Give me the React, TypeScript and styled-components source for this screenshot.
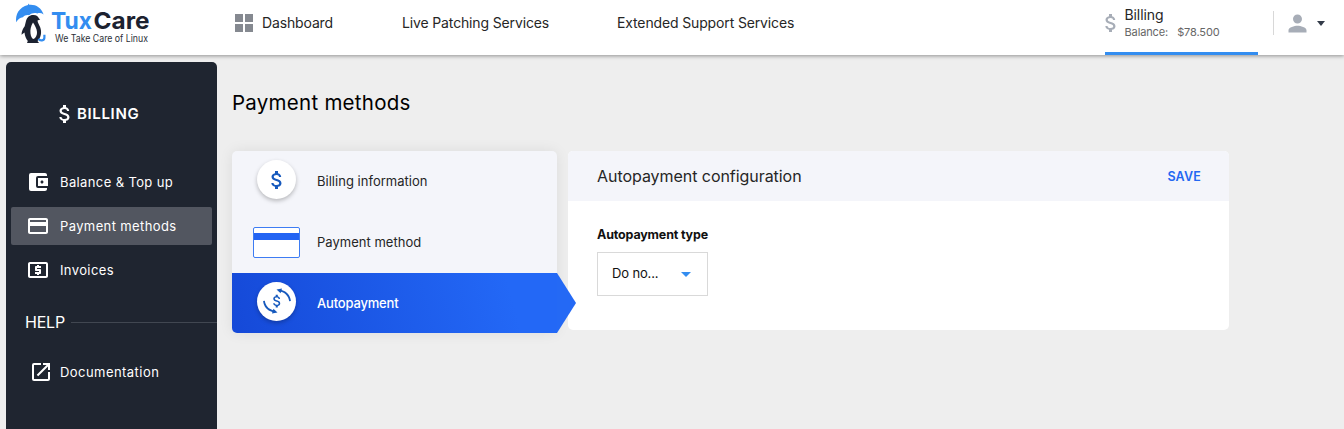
import React from "react";
import styled, { createGlobalStyle, css } from "styled-components";
import {
  MdAttachMoney,
  MdAccountBalanceWallet,
  MdCreditCard,
  MdLocalAtm,
  MdOpenInNew,
  MdPerson,
} from "react-icons/md";

const GlobalStyle = createGlobalStyle`
  * { box-sizing: border-box; }
  body {
    margin: 0;
    background: #eeeeee;
    color: #262626;
    font-family: Inter, "Liberation Sans", sans-serif;
    font-size: 14px;
    overflow: hidden;
  }
  svg { display: block; flex: none; }
`;

const Page = styled.div`
  height: 429px;
  display: flex;
  flex-direction: column;
  overflow: hidden;
`;

const Header = styled.header`
  height: 55px;
  flex: none;
  display: flex;
  align-items: flex-start;
  background: #fff;
  box-shadow: 0 1px 4px rgba(0, 0, 0, 0.4);
  z-index: 1;
`;

const LogoLink = styled.a`
  width: 235px;
  height: 55px;
`;

const NavItem = styled.a<{ $width: number }>`
  display: flex;
  align-items: center;
  gap: 9px;
  width: ${(p) => p.$width}px;
  height: 46px;
  white-space: nowrap;
  font-size: 14px;
  letter-spacing: -0.14px;
  > span {
    margin-bottom: 2px;
  }
`;

const BillingTab = styled.a`
  display: flex;
  width: 153px;
  height: 55px;
  padding-top: 6px;
  border-bottom: 3px solid #338df0;
  > svg {
    margin: 5px 2px 0 -6px;
    color: #a7adb7;
  }
`;

const BillingTexts = styled.div`
  display: flex;
  flex-direction: column;
  margin-left: -0.5px;
`;

const BillingTitle = styled.span`
  font-size: 14px;
  line-height: 18px;
  letter-spacing: -0.1px;
`;

const BillingBalance = styled.span`
  display: flex;
  gap: 9px;
  font-size: 11px;
  line-height: 16px;
  letter-spacing: -0.12px;
  color: #666;
`;

const UserMenu = styled.div`
  display: flex;
  align-items: center;
  height: 24px;
  margin: 11px 0 0 15px;
  padding-left: 10px;
  border-left: 1px solid #d8d8d8;
  color: #a7adb7;
`;

const Caret = styled.span<{ $color: string; $size: number }>`
  border: ${(p) => p.$size}px solid transparent;
  border-top: 5px solid ${(p) => p.$color};
  border-bottom: 0;
`;

const Body = styled.div`
  flex: 1;
  display: flex;
  align-items: flex-start;
  padding: 7px 0 0 6px;
`;

const Sidebar = styled.aside`
  width: 211px;
  height: 380px;
  flex: none;
  padding-top: 39px;
  background: #1f2530;
  border-radius: 5px;
  color: #fff;
`;

const SidebarTitle = styled.h2`
  display: flex;
  align-items: center;
  height: 26px;
  margin: 0 0 36px;
  padding-left: 47px;
  font-size: 15px;
  font-weight: 600;
  letter-spacing: 0.65px;
  > span {
    margin-bottom: 2px;
  }
`;

const SideItem = styled.a<{ $active?: boolean; $indent?: number }>`
  display: flex;
  align-items: center;
  height: 38px;
  margin: 0 5px 6px;
  padding-left: ${(p) => p.$indent ?? 15}px;
  border-radius: 2px;
  font-size: 13px;
  letter-spacing: ${(p) => (p.$indent ? 0.45 : 0.38)}px;
  ${(p) => p.$active && css`background: #525660;`}
  > span {
    margin-left: ${(p) => 25 - (p.$indent ?? 15)}px;
  }
`;

const SideSection = styled.div`
  display: flex;
  align-items: center;
  gap: 6px;
  height: 30px;
  margin: 18px 0 16px;
  padding-left: 19px;
  font-size: 16px;
  letter-spacing: -0.2px;
  &::after {
    content: "";
    flex: 1;
    height: 1px;
    background: #414751;
  }
`;

const Main = styled.main`
  padding: 26px 0 0 15px;
`;

const PageTitle = styled.h1`
  height: 30px;
  margin: 0 0 33px;
  line-height: 30px;
  font-size: 20.5px;
  font-weight: 400;
  letter-spacing: 0.26px;
  color: #000;
`;

const Panels = styled.div`
  display: flex;
  align-items: flex-start;
  gap: 11px;
`;

const Steps = styled.nav`
  position: relative;
  z-index: 1;
  width: 325px;
  height: 182px;
  border-radius: 5px;
  background: #f4f5fa;
  box-shadow: 0 0 14px rgba(0, 0, 0, 0.08);
`;

const Step = styled.a<{ $active?: boolean }>`
  position: relative;
  display: flex;
  align-items: center;
  height: ${(p) => (p.$active ? 60 : 61)}px;
  font-size: 13px;
  letter-spacing: 0.02px;
  > span {
    margin-bottom: ${(p) => (p.$active ? 0 : 2)}px;
  }
  ${(p) =>
    p.$active &&
    css`
      color: #fff;
      font-weight: 500;
      letter-spacing: -0.18px;
      border-radius: 0 0 0 5px;
      background: linear-gradient(75deg, #1549d8, #2368f6 85%);
      &::after {
        content: "";
        position: absolute;
        left: 100%;
        top: 0;
        border: solid transparent;
        border-width: 30px 0 30px 19px;
        border-left-color: #2469f5;
      }
    `}
`;

const StepIcon = styled.div`
  display: flex;
  justify-content: center;
  width: 85px;
  padding-left: 4px;
`;

const Disc = styled.div`
  display: flex;
  align-items: center;
  justify-content: center;
  width: 39px;
  height: 39px;
  margin-top: -4px;
  border-radius: 50%;
  background: #fff;
  color: #1659bd;
  box-shadow: 0 2px 4px rgba(0, 0, 0, 0.25);
`;

const BankCard = styled.div`
  width: 47px;
  height: 31px;
  padding-top: 5px;
  border: 1px solid #3d7cf3;
  border-radius: 2px;
  background: #fff;
  &::before {
    content: "";
    display: block;
    height: 7px;
    background: #2364f3;
  }
`;

const ConfigCard = styled.section`
  width: 661px;
  height: 179px;
  border-radius: 5px;
  background: #fff;
  overflow: hidden;
`;

const ConfigHeader = styled.div`
  display: flex;
  align-items: center;
  justify-content: space-between;
  height: 50px;
  padding: 0 28px 0 29px;
  background: #f4f5fa;
  font-size: 16px;
  letter-spacing: -0.05px;
`;

const SaveButton = styled.button`
  padding: 0;
  border: 0;
  background: none;
  color: #2368f2;
  font: 600 12.5px Inter, sans-serif;
  letter-spacing: 0.2px;
`;

const Field = styled.div`
  display: flex;
  flex-direction: column;
  padding: 24px 29px;
`;

const FieldLabel = styled.label`
  height: 27px;
  line-height: 20px;
  font-size: 12.5px;
  font-weight: 700;
  letter-spacing: -0.17px;
  color: #111;
`;

const Select = styled.div`
  display: flex;
  align-items: center;
  justify-content: space-between;
  width: 111px;
  height: 44px;
  padding: 0 16px 0 14px;
  border: 1px solid #d9d9d9;
  font-size: 13px;
  letter-spacing: -0.15px;
  color: #111;
  > span:first-child {
    margin-bottom: 2px;
  }
`;

const Logo = () => (
  <svg width="160" height="55" viewBox="0 0 160 55">
    <path d="M26 21c1-4 4-6.300 7.500-6 3 .2 4.800 1.600 5.500 3.500l1.200 1-2.700.9c.2 2.500 1.700 4.200 2.600 6.600 2 5.500.8 10.800-2.600 14l1.500 2H27l.8-2c-1.700-2-3-5-3.300-8.500l-3 2.200c.1-3.500 1.500-6 3.200-8.400z" fill="#1c2230" />
    <path d="M33 22.500c-2 3-3 7-2.500 11 .4 3.300 1.500 5.200 3 5.500 2.300-1 3.700-3.700 3.500-7-.2-3.500-2-6.300-4-9.500z" fill="#fff" />
    <path d="M16.300 22.300c-1.400-7.300 2.800-15.200 11.700-17.200l.4-1.500.9 1.200c5.900-.6 12 2.400 14.300 9.700-2-1.500-4.200-1.900-6.300-1-3-.9-5.800-.3-8.200 1.700-2.100-.7-4.600 0-6.200 2.100-2.800.3-5.100 2-6.600 5z" fill="#338df0" />
    <path d="M38.500 38.700c1.500 2.800 6 2 5.900-1.200v-2.700" stroke="#338df0" strokeWidth="2.200" fill="none" />
    <g fontFamily="Inter, sans-serif">
      <text x="51" y="29" fontSize="23.500" fontWeight="700" fill="#338df0" textLength="41" lengthAdjust="spacingAndGlyphs">Tux</text>
      <text x="93.500" y="29" fontSize="23.500" fontWeight="700" fill="#1c2230" textLength="56" lengthAdjust="spacingAndGlyphs">Care</text>
      <text x="55" y="41.500" fontSize="9.800" fill="#2b2f38" textLength="93" lengthAdjust="spacingAndGlyphs">We Take Care of Linux</text>
    </g>
  </svg>
);

const DashboardIcon = () => (
  <svg width="18" height="18" viewBox="0 0 18 18" fill="#858990">
    <path d="M0 0h8v8H0zM10 0h8v8h-8zM0 10h8v8H0zM10 10h8v8h-8z" />
  </svg>
);

const AUTOPAY_ARROW =
  "M14.500 3.600L20 2.400l-.4 1.600C25 5.500 28.400 9.500 28.900 15l-1.700.2C26.500 10.500 23.500 7 19 5.800l-.4 1.400z";

const AutopayIcon = () => (
  <svg width="30" height="30" viewBox="0 0 30 30" fill="#1659bd">
    <path d={AUTOPAY_ARROW} />
    <path d={AUTOPAY_ARROW} transform="rotate(180 15 15)" />
    <g transform="translate(6.700 6.700) scale(.7)">
      <MdAttachMoney size={24} />
    </g>
  </svg>
);

export default function App() {
  return (
    <Page>
      <GlobalStyle />
      <Header>
        <LogoLink><Logo /></LogoLink>
        <NavItem $width={167}><DashboardIcon /><span>Dashboard</span></NavItem>
        <NavItem $width={215}><span>Live Patching Services</span></NavItem>
        <NavItem $width={488}><span>Extended Support Services</span></NavItem>
        <BillingTab>
          <MdAttachMoney size={24} />
          <BillingTexts>
            <BillingTitle>Billing</BillingTitle>
            <BillingBalance><span>Balance:</span><span>$78.500</span></BillingBalance>
          </BillingTexts>
        </BillingTab>
        <UserMenu>
          <MdPerson size={27} />
          <Caret $color="#333b49" $size={4} style={{ marginLeft: 6 }} />
        </UserMenu>
      </Header>
      <Body>
        <Sidebar>
          <SidebarTitle><MdAttachMoney size={24} /><span>BILLING</span></SidebarTitle>
          <SideItem><MdAccountBalanceWallet size={24} /><span>Balance &amp; Top up</span></SideItem>
          <SideItem $active><MdCreditCard size={24} /><span>Payment methods</span></SideItem>
          <SideItem><MdLocalAtm size={24} /><span>Invoices</span></SideItem>
          <SideSection>HELP</SideSection>
          <SideItem $indent={18}><MdOpenInNew size={24} /><span>Documentation</span></SideItem>
        </Sidebar>
        <Main>
          <PageTitle>Payment methods</PageTitle>
          <Panels>
            <Steps>
              <Step><StepIcon><Disc><MdAttachMoney size={24} /></Disc></StepIcon><span>Billing information</span></Step>
              <Step><StepIcon><BankCard /></StepIcon><span>Payment method</span></Step>
              <Step $active><StepIcon><Disc><AutopayIcon /></Disc></StepIcon><span>Autopayment</span></Step>
            </Steps>
            <ConfigCard>
              <ConfigHeader>Autopayment configuration<SaveButton>SAVE</SaveButton></ConfigHeader>
              <Field>
                <FieldLabel>Autopayment type</FieldLabel>
                <Select><span>Do no...</span><Caret $color="#338df0" $size={5} /></Select>
              </Field>
            </ConfigCard>
          </Panels>
        </Main>
      </Body>
    </Page>
  );
}
